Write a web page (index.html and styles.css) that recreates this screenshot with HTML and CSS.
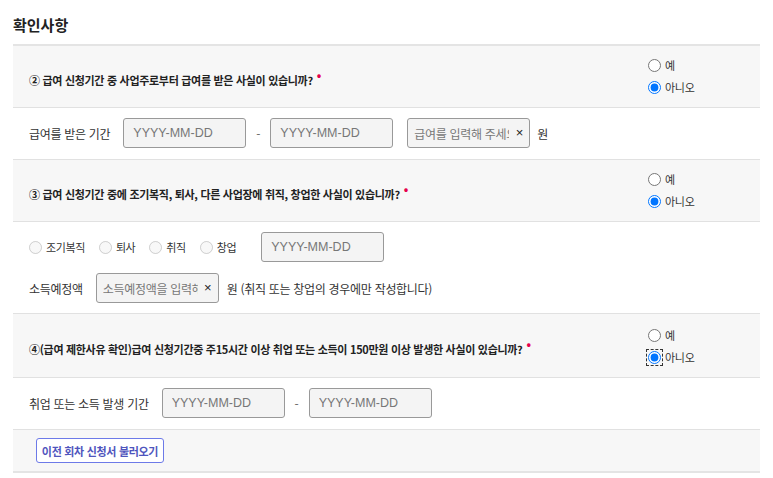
FILE: index.html
```html
<!DOCTYPE html>
<html lang="ko">
<head>
<meta charset="utf-8">
<title>확인사항</title>
<link rel="stylesheet" href="styles.css">
</head>
<body>
<div class="page">
  <h2 class="title">확인사항</h2>
  <div class="section">
    <div class="qrow">
      <div class="qtext">② 급여 신청기간 중 사업주로부터 급여를 받은 사실이 있습니까?<span class="req">•</span></div>
      <div class="radios">
        <label class="opt"><input type="radio" name="q2">예</label>
        <label class="opt"><input type="radio" name="q2" checked>아니오</label>
      </div>
    </div>
    <div class="arow">
      <span class="lbl">급여를 받은 기간</span>
      <span class="field"><input class="inp" placeholder="YYYY-MM-DD"></span>
      <span class="dash">-</span>
      <span class="field"><input class="inp" placeholder="YYYY-MM-DD"></span>
      <span class="field clear"><input class="inp inp-x" placeholder="급여를 입력해 주세요"><span class="x">×</span></span>
      <span class="unit">원</span>
    </div>

    <div class="qrow">
      <div class="qtext">③ 급여 신청기간 중에 조기복직, 퇴사, 다른 사업장에 취직, 창업한 사실이 있습니까?<span class="req">•</span></div>
      <div class="radios">
        <label class="opt"><input type="radio" name="q3">예</label>
        <label class="opt"><input type="radio" name="q3" checked>아니오</label>
      </div>
    </div>
    <div class="arow multi">
      <div class="line">
        <label class="opt dis"><input type="radio" name="q3s" disabled>조기복직</label>
        <label class="opt dis"><input type="radio" name="q3s" disabled>퇴사</label>
        <label class="opt dis"><input type="radio" name="q3s" disabled>취직</label>
        <label class="opt dis"><input type="radio" name="q3s" disabled>창업</label>
        <span class="field gapl"><input class="inp" placeholder="YYYY-MM-DD"></span>
      </div>
      <div class="line">
        <span class="lbl">소득예정액</span>
        <span class="field"><input class="inp inp-x" placeholder="소득예정액을 입력해 주세요"><span class="x">×</span></span>
        <span class="unit">원 (취직 또는 창업의 경우에만 작성합니다)</span>
      </div>
    </div>

    <div class="qrow q4">
      <div class="qtext">④(급여 제한사유 확인)급여 신청기간중 주15시간 이상 취업 또는 소득이 150만원 이상 발생한 사실이 있습니까?<span class="req">•</span></div>
      <div class="radios">
        <label class="opt"><input type="radio" name="q4">예</label>
        <label class="opt focus"><input type="radio" name="q4" checked>아니오</label>
      </div>
    </div>
    <div class="arow">
      <span class="lbl">취업 또는 소득 발생 기간</span>
      <span class="field"><input class="inp" placeholder="YYYY-MM-DD"></span>
      <span class="dash">-</span>
      <span class="field"><input class="inp" placeholder="YYYY-MM-DD"></span>
    </div>
    <div class="brow">
      <button class="btn" type="button">이전 회차 신청서 불러오기</button>
    </div>
  </div>
</div>
</body>
</html>
```

FILE: styles.css
```css
* { box-sizing: border-box; }
html, body { margin: 0; padding: 0; background: #fff; }
body {
  font-family: "Noto Sans CJK KR", "Noto Sans", sans-serif;
  color: #222;
  font-size: 12px;
}
.page { padding: 0 13px; width: 773px; }
.title {
  margin: 0;
  height: 44px;
  padding-top: 14px;
  font-size: 15px;
  font-weight: 700;
  line-height: 22px;
  color: #222;
}
.section { border-top: 2px solid #e4e4e4; }
.qrow {
  display: flex;
  align-items: center;
  background: #f7f7f7;
  border-bottom: 1px solid #e1e1e1;
  min-height: 62px;
  padding-left: 16px;
}
.qrow.q4 { min-height: 64px; }
.qrow.q4 .radios { padding-top: 10px; }
.qtext { flex: 1; font-weight: 700; font-size: 11px; letter-spacing: -0.3px; color: #222; }
.req { color: #e6004c; font-size: 12px; vertical-align: 5px; margin-left: 4px; }
.radios {
  width: 112px;
  align-self: flex-start;
  padding-top: 8px;
  display: flex;
  flex-direction: column;
}
.opt { display: flex; align-items: center; height: 22px; font-size: 11px; letter-spacing: -0.3px; color: #333; }
.opt input { margin: 0 4px 0 0; width: 13px; height: 13px; }
.opt.dis { color: #333; margin-right: 14px; font-size: 11px; letter-spacing: -0.4px; }
.opt.focus input { outline: 1px dashed #333; outline-offset: 1px; }
.arow {
  display: flex;
  align-items: center;
  border-bottom: 1px solid #e1e1e1;
  padding: 10px 16px 11px;
  background: #fff;
}
.arow.multi { flex-direction: column; align-items: flex-start; padding: 10px 16px 10px; gap: 11px; }
.line { display: flex; align-items: center; }
.lbl { font-size: 12px; letter-spacing: -0.3px; color: #333; margin-right: 13px; }
.field { position: relative; display: inline-flex; }
.gapl { margin-left: 11px; }
.inp {
  width: 123px;
  height: 30px;
  border: 1px solid #999;
  border-radius: 3px;
  background: #f4f4f4;
  padding: 0 9px;
  font-family: "Liberation Sans", "Noto Sans CJK KR", sans-serif;
  font-size: 12.5px;
  color: #333;
}
.inp::placeholder { color: #777; }
.inp-x { padding: 0 20px 0 6px; font-family: "Noto Sans CJK KR", sans-serif; font-size: 12px; letter-spacing: -0.3px; }
.x {
  position: absolute;
  right: 7px;
  top: 7px;
  font-size: 13px;
  line-height: 15px;
  color: #222;
  font-family: "Liberation Sans", sans-serif;
}
.dash { width: 24px; text-align: center; color: #666; }
.clear { margin-left: 14px; }
.unit { margin-left: 7px; font-size: 12px; letter-spacing: -0.3px; color: #333; }
.line .unit { margin-left: 8px; }
.brow {
  background: #f7f7f7;
  border-bottom: 2px solid #e4e4e4;
  padding: 8px 0 8px 23px;
}
.btn {
  display: block;
  height: 25px;
  width: 128px;
  border: 1px solid #6d7ae8;
  border-radius: 3px;
  background: #fff;
  color: #4f55bd;
  font-family: "Noto Sans CJK KR", sans-serif;
  font-size: 11px;
  font-weight: 700;
  letter-spacing: -0.3px;
  padding: 0;
}
```
